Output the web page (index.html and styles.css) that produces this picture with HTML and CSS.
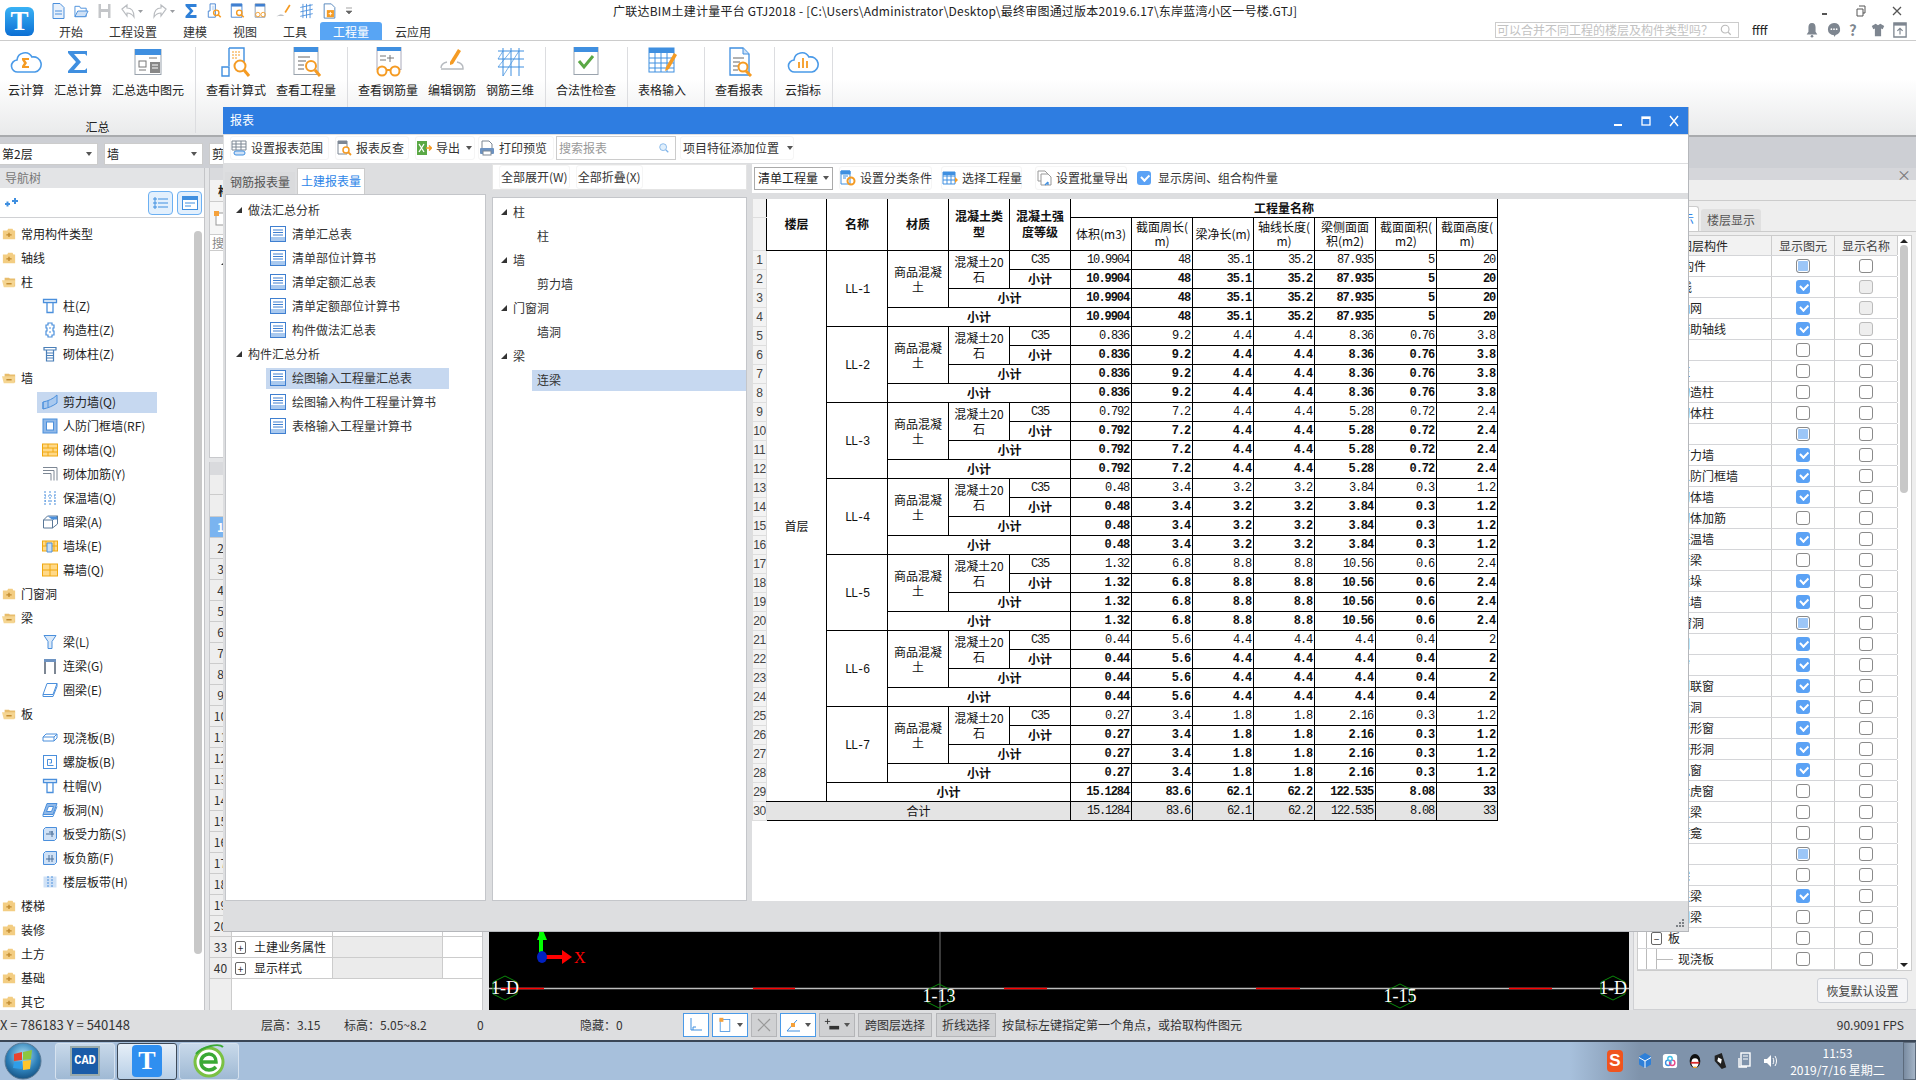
FILE: index.html
```html
<!DOCTYPE html>
<html lang="zh">
<head>
<meta charset="utf-8">
<title>广联达BIM土建计量平台 GTJ2018</title>
<link rel="stylesheet" href="styles.css">
</head>
<body>
<svg class="sprite" xmlns="http://www.w3.org/2000/svg">
  <symbol id="i-folder" viewBox="0 0 16 16"><path d="M1 4h5l1-2h5l1 2h2v10H1z" fill="#f3cd82"/><path d="M5 9h6M8 6.5v5" stroke="#c08a2e" stroke-width="1.6"/></symbol>
  <symbol id="i-folder-open" viewBox="0 0 16 16"><path d="M3 3h5l1 1h6v9H3z" fill="#e8bd6c"/><path d="M0 6h15l-1 8H2z" fill="#f5d591"/><path d="M5 10h6" stroke="#c08a2e" stroke-width="1.6"/></symbol>
  <symbol id="i-col" viewBox="0 0 16 16"><path d="M1.5 1.5h13v3h-13zM5 4.5h6v10H5z" fill="#fff" stroke="#4a8fdc" stroke-width="1.3"/></symbol>
  <symbol id="i-gz" viewBox="0 0 16 16"><path d="M6 1h4v2h2v3h-1v3h1v4h-2v2H6v-2H4V9h1V6H4V3h2z" fill="#fff" stroke="#4a8fdc" stroke-width="1.2"/><path d="M7 6h2M7 10h2" stroke="#4a8fdc"/></symbol>
  <symbol id="i-qt" viewBox="0 0 16 16"><path d="M2 1.5h12v2.5H2zM4.500 4h7v11h-7z" fill="#fff" stroke="#4a7fb8" stroke-width="1.2"/><path d="M5 7h6M5 9.500h6M5 12h6" stroke="#4a7fb8"/></symbol>
  <symbol id="i-wall" viewBox="0 0 16 16"><path d="M1 8C6 7 11 5 15 1v8c-4 3-9 5-14 6z" fill="#a9c9ef" stroke="#4a8fdc"/><path d="M1 8v7M6 7v6" stroke="#4a8fdc"/></symbol>
  <symbol id="i-rf" viewBox="0 0 16 16"><rect x="1" y="1" width="14" height="14" fill="#8fb8e8" stroke="#4a8fdc"/><rect x="4.500" y="4" width="7" height="8" fill="#fff" stroke="#4a8fdc"/></symbol>
  <symbol id="i-brick" viewBox="0 0 16 16"><rect x=".5" y="2" width="15" height="12" fill="#ffd988" stroke="#f0a810"/><path d="M1 6h14M1 10h14M6 2v4M11 6v4M6 10v4" stroke="#f0a810"/></symbol>
  <symbol id="i-jj" viewBox="0 0 16 16"><path d="M1 1.500h14v13M1 4.500h11v10M1 7.500h8v7" fill="none" stroke="#7d8794"/></symbol>
  <symbol id="i-bw" viewBox="0 0 16 16"><path d="M3 1v14M8 1v14M13 1v14" stroke="#4a8fdc" stroke-dasharray="2 1"/><path d="M3 6h10M3 11h10" stroke="#4a8fdc" stroke-dasharray="1 2"/></symbol>
  <symbol id="i-al" viewBox="0 0 16 16"><path d="M1.500 6l4-4h10v8l-5 4h-9z" fill="#fff" stroke="#5a7898"/><path d="M1.500 6h9v8M10.500 6l5-4" fill="none" stroke="#5a7898"/><path d="M6 2.500h9v3H10z" fill="#4a8fdc"/></symbol>
  <symbol id="i-dz" viewBox="0 0 16 16"><rect x=".5" y="3" width="15" height="10" fill="#ffd988" stroke="#f0a810"/><path d="M1 8h14M4 3v5M12 3v10" stroke="#f0a810"/><path d="M5 5h5v9H5z" fill="#c9dff6" stroke="#4a8fdc"/></symbol>
  <symbol id="i-mq" viewBox="0 0 16 16"><rect x=".5" y="2" width="15" height="12" fill="#ffd988" stroke="#f0a810"/><path d="M1 8h14M8 2v12" stroke="#f0a810"/></symbol>
  <symbol id="i-beam" viewBox="0 0 16 16"><path d="M2 1.500h12l-4 6v7H6v-7z" fill="#dbe9f8" stroke="#4a8fdc"/></symbol>
  <symbol id="i-ll" viewBox="0 0 16 16"><path d="M2 1h12v3H2z" fill="#6d93c2"/><path d="M3 4v12M13 4v12" stroke="#7d8794" stroke-width="2"/></symbol>
  <symbol id="i-ql" viewBox="0 0 16 16"><path d="M5 1.500h10l-4 11H1z" fill="#fff" stroke="#4a8fdc"/><path d="M1 12.500v2h10l4-10v-3" fill="none" stroke="#4a8fdc"/></symbol>
  <symbol id="i-xjb" viewBox="0 0 16 16"><path d="M1 7l3-3h11v4l-3 3H1z" fill="#fff" stroke="#4a8fdc"/><path d="M1 7h11v4M12 7l3-3" fill="none" stroke="#4a8fdc"/></symbol>
  <symbol id="i-lxb" viewBox="0 0 16 16"><rect x="1.500" y="1.500" width="13" height="13" fill="#fff" stroke="#4a8fdc"/><path d="M11.500 11.500h-6v-6h4v3.500h-2" fill="none" stroke="#4a8fdc"/></symbol>
  <symbol id="i-bd" viewBox="0 0 16 16"><path d="M5 1.500h10l-4 11H1z" fill="#8fb8e8" stroke="#4a8fdc"/><path d="M6.500 4.500h5l-2 5h-5z" fill="#fff" stroke="#4a8fdc"/><path d="M1 12.500v2h10l4-10" fill="none" stroke="#4a8fdc"/></symbol>
  <symbol id="i-bsl" viewBox="0 0 16 16"><path d="M1.500 3.500l2-2h11v11l-2 2h-11z" fill="#cfe1f6" stroke="#4a8fdc"/><path d="M4 8h8M10 5v6M7 6h4" stroke="#4a6f98" fill="none"/></symbol>
  <symbol id="i-bfj" viewBox="0 0 16 16"><path d="M1.500 3.500l2-2h11v11l-2 2h-11z" fill="#cfe1f6" stroke="#4a8fdc"/><path d="M4 9h8M7 5v7M10 5v7" stroke="#4a6f98" fill="none"/></symbol>
  <symbol id="i-bd2" viewBox="0 0 16 16"><rect x="1.500" y="2.500" width="13" height="11" fill="#cfe1f6"/><path d="M6 2v12M10 2v12" stroke="#4a8fdc" stroke-dasharray="2 1"/></symbol>
  <symbol id="i-doc" viewBox="0 0 16 16"><rect x=".5" y=".5" width="15" height="15" fill="#fff" stroke="#3f7fd0"/><path d="M3 4h10M3 6.500h10M3 9h10" stroke="#3f7fd0"/><path d="M1 11h14v4H1z" fill="#a9c9ef"/></symbol>
  <symbol id="i-mag" viewBox="0 0 16 16"><circle cx="6.500" cy="6.500" r="4.500" fill="none" stroke="#f59b23" stroke-width="2"/><path d="M10 10l5 5" stroke="#f59b23" stroke-width="2.500"/></symbol>
  <symbol id="r-cloud" viewBox="0 0 32 24"><path d="M8 22a6 6 0 0 1-1-12 8 8 0 0 1 15-3 6.500 6.500 0 0 1 3 15z" fill="#fff" stroke="#4a9ae8" stroke-width="1.600"/></symbol>
</svg>

<div class="app">
  <header class="head">
    <div class="logo"><span class="logo-t">T</span></div>
    <div class="head-main">
      <div class="qa">
        <div class="qa-icons">
          <svg class="qi" viewBox="0 0 14 16"><path d="M1.500.5h7l4 4v11h-11z" fill="#e7f0fb" stroke="#4a8fdc"/><path d="M3.500 8h7M3.500 11h7" stroke="#4a8fdc"/></svg>
          <svg class="qi" viewBox="0 0 16 16"><path d="M1 3h5l1 2h6v9H1z" fill="#fff" stroke="#4a8fdc"/><path d="M1 14l3-6h11l-3 6z" fill="#cfe1f6" stroke="#4a8fdc"/></svg>
          <svg class="qi" viewBox="0 0 14 16"><path d="M1 1h12v14H1z" fill="#c4c6c9"/><path d="M3.500 1h7v5h-7zM3.500 9h7v6h-7z" fill="#fff"/></svg>
          <svg class="qi qi-w" viewBox="0 0 24 16"><path d="M2 6l5-4v3c4 0 7 2 7 9-2-3-4-4-7-4v3z" fill="#fff" stroke="#b9bcc0" stroke-width="1.200"/><path d="M18 7h5l-2.500 3z" fill="#9a9da1"/></svg>
          <svg class="qi qi-w" viewBox="0 0 24 16"><path d="M14 6L9 2v3C5 5 2 7 2 14c2-3 4-4 7-4v3z" fill="#fff" stroke="#b9bcc0" stroke-width="1.200"/><path d="M18 7h5l-2.500 3z" fill="#9a9da1"/></svg>
          <svg class="qi" viewBox="0 0 14 16"><path d="M1 1h11v3L5.500 4 9 8l-3.500 4H12v3H1V13l4.500-5L1 3z" fill="#2f80d8"/></svg>
          <svg class="qi" viewBox="0 0 16 18"><path d="M1 16h8V1H3v8H1z" fill="#fff" stroke="#3f7fd0"/><path d="M5 3h3v5H5z" fill="#cfe1f6"/><circle cx="10" cy="11" r="3" fill="none" stroke="#f59b23" stroke-width="1.600"/><path d="M12 13l3 3" stroke="#f59b23" stroke-width="1.800"/></svg>
          <svg class="qi" viewBox="0 0 16 18"><path d="M1 1h12v15H1z" fill="#fff" stroke="#3f7fd0"/><path d="M1 1h12v3H1z" fill="#3f7fd0"/><circle cx="10" cy="11" r="3" fill="none" stroke="#f59b23" stroke-width="1.600"/><path d="M12 13l3 3" stroke="#f59b23" stroke-width="1.800"/></svg>
          <svg class="qi" viewBox="0 0 16 18"><path d="M2 1h11v15H2z" fill="#fff" stroke="#8a97a8"/><path d="M2 1h11v3H2z" fill="#3f7fd0"/><circle cx="5" cy="13" r="2.500" fill="none" stroke="#f59b23"/><circle cx="11" cy="13" r="2.500" fill="none" stroke="#f59b23"/></svg>
          <svg class="qi" viewBox="0 0 16 16"><path d="M9 9l5-8 1.500 1L10.500 10z" fill="#f59b23"/><path d="M1 14c2-3 5-3 8-1H1z" fill="#a8acb1"/></svg>
          <svg class="qi" viewBox="0 0 16 18"><path d="M4 1v16M8 1v16M12 1v16M1 5l14-3M1 10l14-3M1 15l14-3" stroke="#4a8fdc" fill="none"/></svg>
          <svg class="qi" viewBox="0 0 14 18"><path d="M1 1h8l4 4v12H1z" fill="#fff" stroke="#4a7fb8"/><rect x="4" y="8" width="8" height="8" fill="#f59b23"/><path d="M6 12h4M8 10v4" stroke="#fff"/></svg>
          <svg class="qi-dd" viewBox="0 0 8 10"><path d="M1 2h6M1 5h6l-3 3z" fill="#666" stroke="#666" stroke-width=".6"/></svg>
        </div>
        <div class="doc-title">广联达BIM土建计量平台 GTJ2018 - [C:\Users\Administrator\Desktop\最终审图通过版本2019.6.17\东岸蓝湾小区一号楼.GTJ]</div>
        <div class="win-ctrl">
          <svg class="wc" viewBox="0 0 12 12"><path d="M3 9h5" stroke="#555" stroke-width="2"/></svg>
          <svg class="wc" viewBox="0 0 12 12"><path d="M4 1h6v7h-2M2 4h6v7H2z" fill="#fff" stroke="#555"/></svg>
          <svg class="wc" viewBox="0 0 12 12"><path d="M2 2l8 8M10 2l-8 8" stroke="#555" stroke-width="1.300"/></svg>
        </div>
      </div>
      <div class="menu">
        <nav class="tabs">
          <span class="tab">开始</span><span class="tab">工程设置</span><span class="tab">建模</span><span class="tab">视图</span><span class="tab">工具</span><span class="tab tab-on">工程量</span><span class="tab">云应用</span>
        </nav>
        <div class="help-search"><span class="hs-text">可以合并不同工程的楼层及构件类型吗？</span><svg class="hs-ico" viewBox="0 0 14 14"><circle cx="6" cy="6" r="4.500" fill="none" stroke="#bbb" stroke-width="1.300"/><path d="M9.500 9.500l3 3" stroke="#bbb" stroke-width="1.500"/></svg></div>
        <span class="user">ffff</span>
        <div class="head-icons">
          <svg class="hi" viewBox="0 0 14 18"><path d="M7 1c3 0 4 2 4 5v5l2 3H1l2-3V6c0-3 1-5 4-5z" fill="#7e8690"/><circle cx="7" cy="16" r="1.500" fill="#7e8690"/></svg>
          <svg class="hi" viewBox="0 0 16 18"><path d="M8 1a7 7 0 0 1 2 13.700L8 17v-2A7 7 0 0 1 8 1z" fill="#7e8690"/><circle cx="5" cy="8" r="1" fill="#fff"/><circle cx="8" cy="8" r="1" fill="#fff"/><circle cx="11" cy="8" r="1" fill="#fff"/></svg>
          <span class="hi-q">?</span>
          <svg class="hi" viewBox="0 0 18 18"><path d="M6 1L1 4l2 4 2-1v10h8V7l2 1 2-4-5-3-3 2z" fill="#7e8690"/></svg>
          <svg class="hi" viewBox="0 0 16 18"><path d="M1 1h14v16H1z" fill="#fff" stroke="#7e8690" stroke-width="1.500"/><path d="M1 1h14v3H1z" fill="#7e8690"/><path d="M8 14V7M5 10l3-3 3 3" fill="none" stroke="#7e8690" stroke-width="1.300"/></svg>
        </div>
      </div>
    </div>
  </header>

  <section class="ribbon">
    <div class="rgroup rgroup-first">
      <div class="ritems">
        <div class="ritem w36"><svg class="ric" viewBox="0 0 32 24"><use href="#r-cloud"/><path d="M12 8h7v2h-4l2 3-2 3h4v2h-7v-2l2-3-2-3z" fill="#f59b23"/></svg><span>云计算</span></div>
        <div class="ritem w48"><svg class="ric" viewBox="0 0 32 24"><path d="M6 1h19v5l-2-2H12l7 8-7 8h11l2-2v5H6v-2l8-9-8-9z" fill="#3f8fe0"/></svg><span>汇总计算</span></div>
        <div class="ritem w72"><svg class="ric" viewBox="0 0 32 26"><rect x="3" y=".5" width="26" height="25" fill="#fff" stroke="#9aa3ad"/><rect x="3" y="0" width="26" height="6" fill="#3f8fe0"/><rect x="7" y="12" width="7" height="6" fill="none" stroke="#777"/><path d="M7 21h7M17 9h8" stroke="#777"/><rect x="18" y="13" width="10" height="11" fill="#888"/><path d="M20 16h6M20 19h6" stroke="#fff"/></svg><span>汇总选中图元</span></div>
      </div>
      <div class="rlabel">汇总</div>
    </div>
    <div class="rgroup">
      <div class="ritems">
        <div class="ritem w60"><svg class="ric" viewBox="0 0 32 30"><path d="M9 1h15v15M9 1v18M2 20h7v9H2z" fill="#fff" stroke="#3f8fe0" stroke-width="1.400"/><path d="M12 5h9M12 8h9M12 11h5" stroke="#f59b23" stroke-dasharray="2 1"/><circle cx="20" cy="19" r="5.500" fill="#fff" stroke="#f59b23" stroke-width="2"/><path d="M24 23l5 6" stroke="#f59b23" stroke-width="3"/></svg><span>查看计算式</span></div>
        <div class="ritem w60"><svg class="ric" viewBox="0 0 32 30"><rect x="4" y=".5" width="24" height="27" fill="#fff" stroke="#9aa3ad"/><rect x="4" y="0" width="24" height="5" fill="#3f8fe0"/><path d="M8 10h12M8 14h8M8 18h6M8 22h6" stroke="#666"/><circle cx="21" cy="19" r="5" fill="#fff" stroke="#f59b23" stroke-width="2"/><path d="M25 23l5 6" stroke="#f59b23" stroke-width="3"/></svg><span>查看工程量</span></div>
      </div>
    </div>
    <div class="rgroup">
      <div class="ritems">
        <div class="ritem w60"><svg class="ric" viewBox="0 0 32 30"><rect x="5" y=".5" width="24" height="22" fill="#fff" stroke="#aab"/><rect x="5" y="0" width="24" height="4" fill="#3f8fe0"/><path d="M8 9h6M8 13h6M18 8v7M15 11h7" stroke="#777"/><circle cx="10" cy="24" r="4.500" fill="#fff" stroke="#f59b23" stroke-width="2"/><circle cx="23" cy="24" r="4.500" fill="#fff" stroke="#f59b23" stroke-width="2"/><path d="M14 23h5" stroke="#f59b23" stroke-width="2"/></svg><span>查看钢筋量</span></div>
        <div class="ritem w48"><svg class="ric" viewBox="0 0 32 30"><path d="M14 15l8-13 3 2-8 13-3 1z" fill="#f59b23"/><path d="M5 21c0-3 2-5 6-6M21 15c4 1 6 3 6 6v1H5" fill="none" stroke="#b6babf" stroke-width="1.400"/></svg><span>编辑钢筋</span></div>
        <div class="ritem w48"><svg class="ric" viewBox="0 0 32 30"><path d="M9 1v28M17 1v28M25 1v28M4 4h26M4 12h26M4 20h26" stroke="#3f8fe0" fill="none"/><path d="M4 12l5-8M4 20l13-16M9 29l16-25" stroke="#3f8fe0" fill="none" stroke-width=".7"/></svg><span>钢筋三维</span></div>
      </div>
    </div>
    <div class="rgroup">
      <div class="ritems">
        <div class="ritem w60"><svg class="ric" viewBox="0 0 32 30"><rect x="4" y=".5" width="24" height="27" fill="#fff" stroke="#9aa3ad"/><rect x="4" y="0" width="24" height="5" fill="#3f8fe0"/><path d="M9 14l5 6 9-11" fill="none" stroke="#5aa845" stroke-width="3"/></svg><span>合法性检查</span></div>
      </div>
    </div>
    <div class="rgroup rgroup-wide">
      <div class="ritems">
        <div class="ritem w48"><svg class="ric" viewBox="0 0 32 30"><rect x="3" y="1" width="25" height="24" fill="#fff" stroke="#3f8fe0"/><rect x="3" y="1" width="25" height="5" fill="#3f8fe0"/><path d="M3 11h25M3 16h25M3 21h25M9 6v19M15 6v19M21 6v19" stroke="#3f8fe0"/><path d="M20 20l8-14 3 2-8 14-4 2z" fill="#f59b23"/></svg><span>表格输入</span></div>
      </div>
    </div>
    <div class="rgroup">
      <div class="ritems">
        <div class="ritem w48"><svg class="ric" viewBox="0 0 32 30"><path d="M7 1h13l6 6v21H7z" fill="#fff" stroke="#3f8fe0" stroke-width="1.300"/><path d="M20 1v6h6" fill="#cfe1f6" stroke="#3f8fe0"/><path d="M10 11h11M10 15h7M10 19h5M10 23h5" stroke="#666"/><circle cx="20" cy="20" r="4.500" fill="#fff" stroke="#f59b23" stroke-width="2"/><path d="M23 24l5 5" stroke="#f59b23" stroke-width="3"/></svg><span>查看报表</span></div>
      </div>
    </div>
    <div class="rgroup">
      <div class="ritems">
        <div class="ritem w36"><svg class="ric" viewBox="0 0 32 24"><use href="#r-cloud"/><path d="M12 12v6M16 8v10M20 11v7" stroke="#f59b23" stroke-width="1.800"/></svg><span>云指标</span></div>
      </div>
    </div>
  </section>

  <main class="work">
    <div class="selectors">
      <div class="sel">第2层<i class="dd"></i></div>
      <div class="sel">墙<i class="dd"></i></div>
      <div class="sel">剪力墙<i class="dd"></i></div>
    </div>
    <div class="panes">
      <aside class="nav">
        <div class="pane-head">导航树</div>
        <div class="nav-tools">
          <svg class="nav-pin" viewBox="0 0 16 14"><path d="M2 8h5M4.500 5.500v5M9 5h6M12 2v6" stroke="#3f8fe0" stroke-width="2"/></svg>
          <div class="nav-btns">
            <span class="nbtn"><svg viewBox="0 0 16 14"><path d="M1 2h2v2H1zM1 6h2v2H1zM1 10h2v2H1z" fill="none" stroke="#3f8fe0"/><path d="M5 3h10M5 7h10M5 11h10" stroke="#3f8fe0"/></svg></span>
            <span class="nbtn"><svg viewBox="0 0 16 14"><rect x=".5" y=".5" width="15" height="13" fill="#fff" stroke="#3f8fe0"/><rect x="1" y="1" width="14" height="3" fill="#3f8fe0"/><path d="M3 7h10M3 10h6" stroke="#3f8fe0"/></svg></span>
          </div>
        </div>
        <ul class="nav-list">
          <li class="nr"><svg class="fo"><use href="#i-folder"/></svg>常用构件类型</li>
          <li class="nr"><svg class="fo"><use href="#i-folder"/></svg>轴线</li>
          <li class="nr"><svg class="fo"><use href="#i-folder-open"/></svg>柱</li>
          <li class="nr nl"><span class="nli"><svg class="ic"><use href="#i-col"/></svg>柱(Z)</span></li>
          <li class="nr nl"><span class="nli"><svg class="ic"><use href="#i-gz"/></svg>构造柱(Z)</span></li>
          <li class="nr nl"><span class="nli"><svg class="ic"><use href="#i-qt"/></svg>砌体柱(Z)</span></li>
          <li class="nr"><svg class="fo"><use href="#i-folder-open"/></svg>墙</li>
          <li class="nr nl"><span class="nli nli-on"><svg class="ic"><use href="#i-wall"/></svg>剪力墙(Q)</span></li>
          <li class="nr nl"><span class="nli"><svg class="ic"><use href="#i-rf"/></svg>人防门框墙(RF)</span></li>
          <li class="nr nl"><span class="nli"><svg class="ic"><use href="#i-brick"/></svg>砌体墙(Q)</span></li>
          <li class="nr nl"><span class="nli"><svg class="ic"><use href="#i-jj"/></svg>砌体加筋(Y)</span></li>
          <li class="nr nl"><span class="nli"><svg class="ic"><use href="#i-bw"/></svg>保温墙(Q)</span></li>
          <li class="nr nl"><span class="nli"><svg class="ic"><use href="#i-al"/></svg>暗梁(A)</span></li>
          <li class="nr nl"><span class="nli"><svg class="ic"><use href="#i-dz"/></svg>墙垛(E)</span></li>
          <li class="nr nl"><span class="nli"><svg class="ic"><use href="#i-mq"/></svg>幕墙(Q)</span></li>
          <li class="nr"><svg class="fo"><use href="#i-folder"/></svg>门窗洞</li>
          <li class="nr"><svg class="fo"><use href="#i-folder-open"/></svg>梁</li>
          <li class="nr nl"><span class="nli"><svg class="ic"><use href="#i-beam"/></svg>梁(L)</span></li>
          <li class="nr nl"><span class="nli"><svg class="ic"><use href="#i-ll"/></svg>连梁(G)</span></li>
          <li class="nr nl"><span class="nli"><svg class="ic"><use href="#i-ql"/></svg>圈梁(E)</span></li>
          <li class="nr"><svg class="fo"><use href="#i-folder-open"/></svg>板</li>
          <li class="nr nl"><span class="nli"><svg class="ic"><use href="#i-xjb"/></svg>现浇板(B)</span></li>
          <li class="nr nl"><span class="nli"><svg class="ic"><use href="#i-lxb"/></svg>螺旋板(B)</span></li>
          <li class="nr nl"><span class="nli"><svg class="ic"><use href="#i-col"/></svg>柱帽(V)</span></li>
          <li class="nr nl"><span class="nli"><svg class="ic"><use href="#i-bd"/></svg>板洞(N)</span></li>
          <li class="nr nl"><span class="nli"><svg class="ic"><use href="#i-bsl"/></svg>板受力筋(S)</span></li>
          <li class="nr nl"><span class="nli"><svg class="ic"><use href="#i-bfj"/></svg>板负筋(F)</span></li>
          <li class="nr nl"><span class="nli"><svg class="ic"><use href="#i-bd2"/></svg>楼层板带(H)</span></li>
          <li class="nr"><svg class="fo"><use href="#i-folder"/></svg>楼梯</li>
          <li class="nr"><svg class="fo"><use href="#i-folder"/></svg>装修</li>
          <li class="nr"><svg class="fo"><use href="#i-folder"/></svg>土方</li>
          <li class="nr"><svg class="fo"><use href="#i-folder"/></svg>基础</li>
          <li class="nr"><svg class="fo"><use href="#i-folder"/></svg>其它</li>
        </ul>
        <div class="nav-scroll"></div>
      </aside>

      <section class="mid">
        <div class="comp">
          <div class="strip"></div>
          <div class="comp-title">构件列表</div>
          <div class="comp-tools"><svg class="ic" viewBox="0 0 16 16"><rect x="3" y="3" width="11" height="12" fill="#fff" stroke="#999"/><rect x="1" y="1" width="5" height="5" fill="#f5a13a"/></svg></div>
          <div class="comp-search">搜索构件...</div>
          <div class="comp-tree"><i class="tri"></i>剪力墙</div>
        </div>
        <div class="prop">
          <div class="strip"></div>
          <div class="prop-head"><span class="pc-n"></span><span class="pc-a">属性名称</span><span class="pc-b">属性值</span><span class="pc-c">附加</span></div>
          <div class="prop-blank"><span class="pc-n"></span></div>
          <div class="pr pr-on"><span class="pc-n">1</span><span class="pc-a">名称</span><span class="pc-b"></span><span class="pc-c"></span></div>
          <div class="pr"><span class="pc-n">2</span><span class="pc-a"></span><span class="pc-b"></span><span class="pc-c"></span></div>
          <div class="pr"><span class="pc-n">3</span><span class="pc-a"></span><span class="pc-b"></span><span class="pc-c"></span></div>
          <div class="pr"><span class="pc-n">4</span><span class="pc-a"></span><span class="pc-b"></span><span class="pc-c"></span></div>
          <div class="pr"><span class="pc-n">5</span><span class="pc-a"></span><span class="pc-b"></span><span class="pc-c"></span></div>
          <div class="pr"><span class="pc-n">6</span><span class="pc-a"></span><span class="pc-b"></span><span class="pc-c"></span></div>
          <div class="pr"><span class="pc-n">7</span><span class="pc-a"></span><span class="pc-b"></span><span class="pc-c"></span></div>
          <div class="pr"><span class="pc-n">8</span><span class="pc-a"></span><span class="pc-b"></span><span class="pc-c"></span></div>
          <div class="pr"><span class="pc-n">9</span><span class="pc-a"></span><span class="pc-b"></span><span class="pc-c"></span></div>
          <div class="pr"><span class="pc-n">10</span><span class="pc-a"></span><span class="pc-b"></span><span class="pc-c"></span></div>
          <div class="pr"><span class="pc-n">11</span><span class="pc-a"></span><span class="pc-b"></span><span class="pc-c"></span></div>
          <div class="pr"><span class="pc-n">12</span><span class="pc-a"></span><span class="pc-b"></span><span class="pc-c"></span></div>
          <div class="pr"><span class="pc-n">13</span><span class="pc-a"></span><span class="pc-b"></span><span class="pc-c"></span></div>
          <div class="pr"><span class="pc-n">14</span><span class="pc-a"></span><span class="pc-b"></span><span class="pc-c"></span></div>
          <div class="pr"><span class="pc-n">15</span><span class="pc-a"></span><span class="pc-b"></span><span class="pc-c"></span></div>
          <div class="pr"><span class="pc-n">16</span><span class="pc-a"></span><span class="pc-b"></span><span class="pc-c"></span></div>
          <div class="pr"><span class="pc-n">17</span><span class="pc-a"></span><span class="pc-b"></span><span class="pc-c"></span></div>
          <div class="pr"><span class="pc-n">18</span><span class="pc-a"></span><span class="pc-b"></span><span class="pc-c"></span></div>
          <div class="pr"><span class="pc-n">19</span><span class="pc-a"></span><span class="pc-b"></span><span class="pc-c"></span></div>
          <div class="pr"><span class="pc-n">20</span><span class="pc-a"></span><span class="pc-b"></span><span class="pc-c"></span></div>
          <div class="pr"><span class="pc-n">33</span><span class="pc-a"><i class="plus">+</i>土建业务属性</span><span class="pc-b pc-g"></span><span class="pc-c"></span></div>
          <div class="pr"><span class="pc-n">40</span><span class="pc-a"><i class="plus">+</i>显示样式</span><span class="pc-b pc-g"></span><span class="pc-c"></span></div>
          <div class="prop-fill"><span class="pc-n"></span></div>
        </div>
      </section>

      <section class="canvas">
        <svg class="scene" viewBox="489 168 1140 842" xmlns="http://www.w3.org/2000/svg">
          <path d="M940 168V1010" stroke="#777"/>
          <path d="M489 988.500H1629" stroke="#bdbdbd" stroke-width="1.500"/>
          <path d="M501 988.500h43M753 988.500h42M1004 988.500h43M1256 988.500h44M1509 988.500h43" stroke="#f00" stroke-width="1.500"/>
          <path d="M541 957V932" stroke="#0f0" stroke-width="4"/><path d="M537 940l5-12 5 12z" fill="#0f0"/>
          <path d="M542 957h25" stroke="#f00" stroke-width="4"/><path d="M562 950l10 7-10 7z" fill="#f00"/>
          <ellipse cx="542" cy="957" rx="5" ry="6" fill="#0020c0"/>
          <text class="ax" x="574" y="963">X</text>
          <g fill="none" stroke="#0a8a0a"><path d="M505 976l12 6v12l-12 6-12-6v-12zM939 984l12 6v12l-12 6-12-6v-12zM1400 984l12 6v12l-12 6-12-6v-12zM1613 976l12 6v12l-12 6-12-6v-12z"/></g>
          <text class="lb" x="505" y="994">1-D</text>
          <text class="lb" x="939" y="1002">1-13</text>
          <text class="lb" x="1400" y="1002">1-15</text>
          <text class="lb" x="1613" y="994">1-D</text>
        </svg>
      </section>

      <aside class="layers">
        <div class="ly-head"><span class="ly-x">×</span></div>
        <div class="ly-tool"></div>
        <div class="ly-tabs"><span class="ly-tab ly-tab-on">图层显示</span><span class="ly-tab">楼层显示</span></div>
        <div class="ly-body">
          <div class="ly-table">
            <div class="lr lr-head"><span class="lc-a lc-head">图层构件</span><span class="lc-b">显示图元</span><span class="lc-b">显示名称</span></div>
            <div class="lr"><span class="lc-a l0">所有构件</span><span class="lc-b"><i class="cb part"></i></span><span class="lc-b"><i class="cb"></i></span></div>
            <div class="lr"><span class="lc-a l1">轴线</span><span class="lc-b"><i class="cb on"></i></span><span class="lc-b"><i class="cb off"></i></span></div>
            <div class="lr"><span class="lc-a l2">轴网</span><span class="lc-b"><i class="cb on"></i></span><span class="lc-b"><i class="cb off"></i></span></div>
            <div class="lr"><span class="lc-a l2">辅助轴线</span><span class="lc-b"><i class="cb on"></i></span><span class="lc-b"><i class="cb off"></i></span></div>
            <div class="lr"><span class="lc-a l1">柱</span><span class="lc-b"><i class="cb"></i></span><span class="lc-b"><i class="cb"></i></span></div>
            <div class="lr"><span class="lc-a l2">柱</span><span class="lc-b"><i class="cb"></i></span><span class="lc-b"><i class="cb"></i></span></div>
            <div class="lr"><span class="lc-a l2">构造柱</span><span class="lc-b"><i class="cb"></i></span><span class="lc-b"><i class="cb"></i></span></div>
            <div class="lr"><span class="lc-a l2">砌体柱</span><span class="lc-b"><i class="cb"></i></span><span class="lc-b"><i class="cb"></i></span></div>
            <div class="lr"><span class="lc-a l1">墙</span><span class="lc-b"><i class="cb part"></i></span><span class="lc-b"><i class="cb"></i></span></div>
            <div class="lr"><span class="lc-a l2">剪力墙</span><span class="lc-b"><i class="cb on"></i></span><span class="lc-b"><i class="cb"></i></span></div>
            <div class="lr"><span class="lc-a l2">人防门框墙</span><span class="lc-b"><i class="cb on"></i></span><span class="lc-b"><i class="cb"></i></span></div>
            <div class="lr"><span class="lc-a l2">砌体墙</span><span class="lc-b"><i class="cb on"></i></span><span class="lc-b"><i class="cb"></i></span></div>
            <div class="lr"><span class="lc-a l2">砌体加筋</span><span class="lc-b"><i class="cb"></i></span><span class="lc-b"><i class="cb"></i></span></div>
            <div class="lr"><span class="lc-a l2">保温墙</span><span class="lc-b"><i class="cb on"></i></span><span class="lc-b"><i class="cb"></i></span></div>
            <div class="lr"><span class="lc-a l2">暗梁</span><span class="lc-b"><i class="cb"></i></span><span class="lc-b"><i class="cb"></i></span></div>
            <div class="lr"><span class="lc-a l2">墙垛</span><span class="lc-b"><i class="cb on"></i></span><span class="lc-b"><i class="cb"></i></span></div>
            <div class="lr"><span class="lc-a l2">幕墙</span><span class="lc-b"><i class="cb on"></i></span><span class="lc-b"><i class="cb"></i></span></div>
            <div class="lr"><span class="lc-a l1">门窗洞</span><span class="lc-b"><i class="cb part"></i></span><span class="lc-b"><i class="cb"></i></span></div>
            <div class="lr"><span class="lc-a l2">门</span><span class="lc-b"><i class="cb on"></i></span><span class="lc-b"><i class="cb"></i></span></div>
            <div class="lr"><span class="lc-a l2">窗</span><span class="lc-b"><i class="cb on"></i></span><span class="lc-b"><i class="cb"></i></span></div>
            <div class="lr"><span class="lc-a l2">门联窗</span><span class="lc-b"><i class="cb on"></i></span><span class="lc-b"><i class="cb"></i></span></div>
            <div class="lr"><span class="lc-a l2">墙洞</span><span class="lc-b"><i class="cb on"></i></span><span class="lc-b"><i class="cb"></i></span></div>
            <div class="lr"><span class="lc-a l2">带形窗</span><span class="lc-b"><i class="cb on"></i></span><span class="lc-b"><i class="cb"></i></span></div>
            <div class="lr"><span class="lc-a l2">带形洞</span><span class="lc-b"><i class="cb on"></i></span><span class="lc-b"><i class="cb"></i></span></div>
            <div class="lr"><span class="lc-a l2">飘窗</span><span class="lc-b"><i class="cb on"></i></span><span class="lc-b"><i class="cb"></i></span></div>
            <div class="lr"><span class="lc-a l2">老虎窗</span><span class="lc-b"><i class="cb"></i></span><span class="lc-b"><i class="cb"></i></span></div>
            <div class="lr"><span class="lc-a l2">过梁</span><span class="lc-b"><i class="cb"></i></span><span class="lc-b"><i class="cb"></i></span></div>
            <div class="lr"><span class="lc-a l2">壁龛</span><span class="lc-b"><i class="cb"></i></span><span class="lc-b"><i class="cb"></i></span></div>
            <div class="lr"><span class="lc-a l1">梁</span><span class="lc-b"><i class="cb part"></i></span><span class="lc-b"><i class="cb"></i></span></div>
            <div class="lr"><span class="lc-a l2">梁</span><span class="lc-b"><i class="cb"></i></span><span class="lc-b"><i class="cb"></i></span></div>
            <div class="lr"><span class="lc-a l2">连梁</span><span class="lc-b"><i class="cb on"></i></span><span class="lc-b"><i class="cb"></i></span></div>
            <div class="lr"><span class="lc-a l2">圈梁</span><span class="lc-b"><i class="cb"></i></span><span class="lc-b"><i class="cb"></i></span></div>
            <div class="lr"><span class="lc-a l1 lc-minus"><i class="minus">−</i>板</span><span class="lc-b"><i class="cb"></i></span><span class="lc-b"><i class="cb"></i></span></div>
            <div class="lr"><span class="lc-a l2 lc-leaf">现浇板</span><span class="lc-b"><i class="cb"></i></span><span class="lc-b"><i class="cb"></i></span></div>
          </div>
          <div class="ly-scroll"><i class="arr-up"></i><div class="ly-thumb"></div><i class="arr-down"></i></div>
        </div>
        <div class="ly-foot"><button class="restore">恢复默认设置</button></div>
      </aside>
    </div>
  </main>

  <footer class="status">
    <span class="st st-xy">X = 786183 Y = 540148</span>
    <span class="st st-h">层高：3.15</span>
    <span class="st st-b">标高：5.05~8.2</span>
    <span class="st st-z">0</span>
    <span class="st st-z">隐藏：0</span>
    <span class="sb sb-on sb-s"><svg viewBox="0 0 16 16"><path d="M3 1v12h11M5 13v-3h3" fill="none" stroke="#3f8fe0"/></svg></span>
    <span class="sb sb-on sb-m"><svg viewBox="0 0 16 20"><rect x="2" y="3" width="12" height="15" fill="none" stroke="#3f8fe0"/><rect x="1" y="1" width="5" height="5" fill="#f5a13a"/></svg><i class="dd"></i></span>
    <span class="sb sb-s sb-g"><svg viewBox="0 0 16 16"><path d="M2 2l12 12M14 2L2 14" stroke="#999" stroke-width="1.200"/></svg></span>
    <span class="sb sb-on sb-m"><svg viewBox="0 0 16 16"><path d="M2 14h13M2 14L12 3" fill="none" stroke="#3f8fe0"/><rect x="6" y="6" width="4" height="4" fill="#f5a13a"/></svg><i class="dd"></i></span>
    <span class="sb sb-m sb-g"><svg viewBox="0 0 18 16"><path d="M1 4h6M4 1v6" stroke="#333"/><rect x="6" y="9" width="11" height="4" fill="#333"/></svg><i class="dd"></i></span>
    <span class="sb sb-t sb-g">跨图层选择</span>
    <span class="sb sb-t2 sb-g">折线选择</span>
    <span class="st st-hint">按鼠标左键指定第一个角点，或拾取构件图元</span>
    <span class="st st-fps">90.9091 FPS</span>
  </footer>

  <footer class="taskbar">
    <div class="orb"><svg viewBox="0 0 38 38"><defs><radialGradient id="g-orb" cx=".5" cy=".35" r=".7"><stop offset="0" stop-color="#aee1f5"/><stop offset=".6" stop-color="#2c7fb8"/><stop offset="1" stop-color="#134a78"/></radialGradient></defs><circle cx="19" cy="19" r="18" fill="url(#g-orb)" stroke="#5a7a95"/><path d="M10 12l8-2v8l-8 1z" fill="#e8432e"/><path d="M19 10l9-2-1 9-8 1z" fill="#8cc63f"/><path d="M10 20l8-1v8l-9-1z" fill="#2f9ee8"/><path d="M19 19l8-1-1 9-7 1z" fill="#fdc52b"/></svg></div>
    <div class="tb-btn"><span class="tb-cad">CAD</span></div>
    <div class="tb-btn tb-btn-on"><span class="tb-t">T</span></div>
    <div class="tb-btn"><svg class="tb-e" viewBox="0 0 32 34"><circle cx="16" cy="18" r="14" fill="#fff" stroke="#7ac143" stroke-width="3"/><path d="M9 18h14c0-5-3-8-7-8s-8 3-8 8 4 8 8 8c3 0 5-1 7-3" fill="none" stroke="#3aa935" stroke-width="3.500"/><path d="M3 10C10 2 26-1 30 3" fill="none" stroke="#3aa935" stroke-width="2"/></svg></div>
    <div class="tray">
      <span class="tr-s">S</span>
      <svg class="ti" viewBox="0 0 16 18"><path d="M8 1l6 3.500v8L8 16l-6-3.500v-8z" fill="#2f80d8"/><path d="M8 9L2 5.500M8 9l6-3.500M8 9v7" stroke="#fff"/></svg>
      <svg class="ti" viewBox="0 0 18 18"><rect x="1" y="1" width="16" height="16" rx="3" fill="#fff"/><circle cx="7" cy="11" r="3" fill="none" stroke="#3f8fe0" stroke-width="1.600"/><circle cx="11.500" cy="11" r="3" fill="none" stroke="#e84a8a" stroke-width="1.600"/><circle cx="9" cy="6.500" r="2.500" fill="none" stroke="#3fc0e8" stroke-width="1.600"/></svg>
      <svg class="ti" viewBox="0 0 18 20"><ellipse cx="9" cy="10" rx="6" ry="8" fill="#111"/><ellipse cx="9" cy="12" rx="4" ry="5" fill="#fff"/><path d="M4 11l10 0v2H4z" fill="#d92b2b"/><path d="M6 18h6l-3-2z" fill="#f5a623"/></svg>
      <svg class="ti" viewBox="0 0 18 20"><path d="M3 4l8-3 5 16-5 2L3 10z" fill="#222"/><path d="M7 6l4 2-1 5-4-3z" fill="#fff"/></svg>
      <svg class="ti" viewBox="0 0 16 18"><rect x="4" y="1" width="9" height="13" fill="none" stroke="#fff" stroke-width="1.400"/><path d="M2 6v9h8" fill="none" stroke="#fff" stroke-width="1.400"/><path d="M6 4h5M6 7h5" stroke="#fff"/></svg>
      <svg class="ti" viewBox="0 0 16 18"><path d="M2 7h3l4-4v12l-4-4H2z" fill="#fff"/><path d="M11 6c1 2 1 4 0 6M13 4c2 3 2 7 0 10" fill="none" stroke="#fff"/></svg>
    </div>
    <div class="clock"><span>11:53</span><span>2019/7/16 星期二</span></div>
    <div class="show-desk"></div>
  </footer>

  <div class="dialog">
    <div class="dlg-title"><span>报表</span>
      <div class="dlg-ctrl">
        <svg viewBox="0 0 12 12"><path d="M2 10h8" stroke="#fff" stroke-width="2"/></svg>
        <svg viewBox="0 0 12 12"><rect x="2" y="2" width="8" height="8" fill="none" stroke="#fff" stroke-width="1.300"/><path d="M2 3h8" stroke="#fff" stroke-width="2"/></svg>
        <svg viewBox="0 0 12 12"><path d="M2 1l8 10M10 1L2 11" stroke="#fff" stroke-width="1.400"/></svg>
      </div>
    </div>
    <div class="dlg-tools">
      <span class="tool t1"><svg class="ic" viewBox="0 0 16 16"><path d="M1 1h14v9H1zM1 4h14M1 7h14M5 1v9M10 1v9" fill="#fff" stroke="#7d8794"/><rect x="3" y="11" width="11" height="4" rx="2" fill="#cfe1f6" stroke="#3f8fe0"/></svg>设置报表范围</span>
      <span class="tool t2"><svg class="ic" viewBox="0 0 16 16"><path d="M2 1h9v13H2z" fill="#fff" stroke="#7d8794"/><path d="M2 1h9v3H2z" fill="#7d8794"/><circle cx="10" cy="10" r="3" fill="#fff" stroke="#f59b23" stroke-width="1.500"/><path d="M12 12l3 3" stroke="#f59b23" stroke-width="1.800"/></svg>报表反查</span>
      <span class="tool t3"><svg class="ic" viewBox="0 0 16 16"><rect x="1" y="1" width="10" height="14" fill="#5aa845"/><path d="M3 4l5 8M8 4l-5 8" stroke="#fff" stroke-width="1.300"/><path d="M10 8h5M13 5.500L15.500 8 13 10.500" fill="none" stroke="#f59b23" stroke-width="1.500"/></svg>导出<i class="dd"></i></span>
      <span class="tool t4"><svg class="ic" viewBox="0 0 16 16"><path d="M3 1h7l3 3v5H3z" fill="#fff" stroke="#7d8794"/><rect x="1" y="8" width="14" height="6" rx="1" fill="#6d93c2"/><rect x="4" y="11" width="8" height="4" fill="#fff" stroke="#7d8794"/></svg>打印预览</span>
      <span class="dlg-search"><span class="ds-t">搜索报表</span><svg class="ds-i" viewBox="0 0 14 14"><circle cx="6" cy="6" r="4" fill="#e0effc" stroke="#7db2e8"/><path d="M9 9l3 3" stroke="#7db2e8" stroke-width="1.400"/></svg></span>
      <span class="tool t5">项目特征添加位置<i class="dd"></i></span>
    </div>
    <div class="dlg-body">
      <div class="d-left">
        <div class="d-tabs"><span class="d-tab">钢筋报表量</span><span class="d-tab d-tab-on">土建报表量</span></div>
        <ul class="d-tree">
          <li class="dr"><i class="tri"></i>做法汇总分析</li>
          <li class="dr dl"><span class="dli"><svg class="ic"><use href="#i-doc"/></svg>清单汇总表</span></li>
          <li class="dr dl"><span class="dli"><svg class="ic"><use href="#i-doc"/></svg>清单部位计算书</span></li>
          <li class="dr dl"><span class="dli"><svg class="ic"><use href="#i-doc"/></svg>清单定额汇总表</span></li>
          <li class="dr dl"><span class="dli"><svg class="ic"><use href="#i-doc"/></svg>清单定额部位计算书</span></li>
          <li class="dr dl"><span class="dli"><svg class="ic"><use href="#i-doc"/></svg>构件做法汇总表</span></li>
          <li class="dr"><i class="tri"></i>构件汇总分析</li>
          <li class="dr dl"><span class="dli dli-on"><svg class="ic"><use href="#i-doc"/></svg>绘图输入工程量汇总表</span></li>
          <li class="dr dl"><span class="dli"><svg class="ic"><use href="#i-doc"/></svg>绘图输入构件工程量计算书</span></li>
          <li class="dr dl"><span class="dli"><svg class="ic"><use href="#i-doc"/></svg>表格输入工程量计算书</span></li>
        </ul>
      </div>
      <div class="d-mid">
        <div class="m-tools"><span class="tool">全部展开(W)</span><span class="tool">全部折叠(X)</span></div>
        <ul class="m-tree">
          <li class="mr"><i class="tri"></i>柱</li>
          <li class="mr ml"><span class="mli">柱</span></li>
          <li class="mr"><i class="tri"></i>墙</li>
          <li class="mr ml"><span class="mli">剪力墙</span></li>
          <li class="mr"><i class="tri"></i>门窗洞</li>
          <li class="mr ml"><span class="mli">墙洞</span></li>
          <li class="mr"><i class="tri"></i>梁</li>
          <li class="mr ml"><span class="mli mli-on">连梁</span></li>
        </ul>
      </div>
      <div class="d-right">
        <div class="r-tools">
          <span class="r-select">清单工程量<i class="dd"></i></span>
          <span class="tool r1"><svg class="ic" viewBox="0 0 16 16"><path d="M1 1h9v13H1z" fill="#fff" stroke="#3f8fe0"/><path d="M1 1h9v3H1zM3 6h5M3 8h3" fill="#3f8fe0" stroke="#3f8fe0"/><circle cx="11" cy="11" r="3.500" fill="none" stroke="#f59b23" stroke-width="2"/></svg>设置分类条件</span>
          <span class="tool r2"><svg class="ic" viewBox="0 0 16 16"><path d="M1 2h12v12H1zM1 6h12M1 10h12M5 2v12M9 2v12" fill="#fff" stroke="#3f8fe0"/><path d="M1 2h12v3H1z" fill="#3f8fe0"/><path d="M13 7l3 3-3 3z" fill="#f59b23"/></svg>选择工程量</span>
          <span class="tool r3"><svg class="ic" viewBox="0 0 16 16"><path d="M2 1h7l3 3v7H2z" fill="#fff" stroke="#999"/><path d="M5 4h7l3 3v8H5z" fill="#fff" stroke="#999"/><path d="M9 15l3-3M12 12v3" stroke="#3f8fe0" stroke-width="1.300"/></svg>设置批量导出</span>
          <i class="cb on r-check"></i><span class="r-label">显示房间、组合构件量</span>
        </div>
        <div class="sheet">
          <table class="tbl">
            <colgroup><col class="c-rn"><col class="c-fl"><col class="c-w"><col class="c-w"><col class="c-w"><col class="c-w"><col class="c-w"><col class="c-w"><col class="c-w"><col class="c-w"><col class="c-w"><col class="c-w"><col class="c-w"></colgroup>
            <thead>
              <tr class="h1">
                <th class="rn rn-h"></th><th rowspan="2">楼层</th><th rowspan="2">名称</th><th rowspan="2">材质</th><th rowspan="2">混凝土类<br>型</th><th rowspan="2">混凝土强<br>度等级</th><th colspan="7">工程量名称</th>
              </tr>
              <tr class="h2">
                <th class="rn rn-h"></th><th class="hn">体积(m3)</th><th class="hn">截面周长(<br>m)</th><th class="hn">梁净长(m)</th><th class="hn">轴线长度(<br>m)</th><th class="hn">梁侧面面<br>积(m2)</th><th class="hn">截面面积(<br>m2)</th><th class="hn">截面高度(<br>m)</th>
              </tr>
            </thead>
            <tbody>
              <tr><td class="rn">1</td><td class="cn fl" rowspan="29">首层</td><td class="cn lat" rowspan="4">LL-1</td><td class="cn wr" rowspan="3">商品混凝土</td><td class="cn wr" rowspan="2">混凝土20石</td><td class="cn lat">C35</td><td class="n">10.9904</td><td class="n">48</td><td class="n">35.1</td><td class="n">35.2</td><td class="n">87.935</td><td class="n">5</td><td class="n">20</td></tr>
              <tr class="bold"><td class="rn">2</td><td class="cn xj">小计</td><td class="n">10.9904</td><td class="n">48</td><td class="n">35.1</td><td class="n">35.2</td><td class="n">87.935</td><td class="n">5</td><td class="n">20</td></tr>
              <tr class="bold"><td class="rn">3</td><td class="cn xj" colspan="2">小计</td><td class="n">10.9904</td><td class="n">48</td><td class="n">35.1</td><td class="n">35.2</td><td class="n">87.935</td><td class="n">5</td><td class="n">20</td></tr>
              <tr class="bold"><td class="rn">4</td><td class="cn xj" colspan="3">小计</td><td class="n">10.9904</td><td class="n">48</td><td class="n">35.1</td><td class="n">35.2</td><td class="n">87.935</td><td class="n">5</td><td class="n">20</td></tr>

              <tr><td class="rn">5</td><td class="cn lat" rowspan="4">LL-2</td><td class="cn wr" rowspan="3">商品混凝土</td><td class="cn wr" rowspan="2">混凝土20石</td><td class="cn lat">C35</td><td class="n">0.836</td><td class="n">9.2</td><td class="n">4.4</td><td class="n">4.4</td><td class="n">8.36</td><td class="n">0.76</td><td class="n">3.8</td></tr>
              <tr class="bold"><td class="rn">6</td><td class="cn xj">小计</td><td class="n">0.836</td><td class="n">9.2</td><td class="n">4.4</td><td class="n">4.4</td><td class="n">8.36</td><td class="n">0.76</td><td class="n">3.8</td></tr>
              <tr class="bold"><td class="rn">7</td><td class="cn xj" colspan="2">小计</td><td class="n">0.836</td><td class="n">9.2</td><td class="n">4.4</td><td class="n">4.4</td><td class="n">8.36</td><td class="n">0.76</td><td class="n">3.8</td></tr>
              <tr class="bold"><td class="rn">8</td><td class="cn xj" colspan="3">小计</td><td class="n">0.836</td><td class="n">9.2</td><td class="n">4.4</td><td class="n">4.4</td><td class="n">8.36</td><td class="n">0.76</td><td class="n">3.8</td></tr>

              <tr><td class="rn">9</td><td class="cn lat" rowspan="4">LL-3</td><td class="cn wr" rowspan="3">商品混凝土</td><td class="cn wr" rowspan="2">混凝土20石</td><td class="cn lat">C35</td><td class="n">0.792</td><td class="n">7.2</td><td class="n">4.4</td><td class="n">4.4</td><td class="n">5.28</td><td class="n">0.72</td><td class="n">2.4</td></tr>
              <tr class="bold"><td class="rn">10</td><td class="cn xj">小计</td><td class="n">0.792</td><td class="n">7.2</td><td class="n">4.4</td><td class="n">4.4</td><td class="n">5.28</td><td class="n">0.72</td><td class="n">2.4</td></tr>
              <tr class="bold"><td class="rn">11</td><td class="cn xj" colspan="2">小计</td><td class="n">0.792</td><td class="n">7.2</td><td class="n">4.4</td><td class="n">4.4</td><td class="n">5.28</td><td class="n">0.72</td><td class="n">2.4</td></tr>
              <tr class="bold"><td class="rn">12</td><td class="cn xj" colspan="3">小计</td><td class="n">0.792</td><td class="n">7.2</td><td class="n">4.4</td><td class="n">4.4</td><td class="n">5.28</td><td class="n">0.72</td><td class="n">2.4</td></tr>

              <tr><td class="rn">13</td><td class="cn lat" rowspan="4">LL-4</td><td class="cn wr" rowspan="3">商品混凝土</td><td class="cn wr" rowspan="2">混凝土20石</td><td class="cn lat">C35</td><td class="n">0.48</td><td class="n">3.4</td><td class="n">3.2</td><td class="n">3.2</td><td class="n">3.84</td><td class="n">0.3</td><td class="n">1.2</td></tr>
              <tr class="bold"><td class="rn">14</td><td class="cn xj">小计</td><td class="n">0.48</td><td class="n">3.4</td><td class="n">3.2</td><td class="n">3.2</td><td class="n">3.84</td><td class="n">0.3</td><td class="n">1.2</td></tr>
              <tr class="bold"><td class="rn">15</td><td class="cn xj" colspan="2">小计</td><td class="n">0.48</td><td class="n">3.4</td><td class="n">3.2</td><td class="n">3.2</td><td class="n">3.84</td><td class="n">0.3</td><td class="n">1.2</td></tr>
              <tr class="bold"><td class="rn">16</td><td class="cn xj" colspan="3">小计</td><td class="n">0.48</td><td class="n">3.4</td><td class="n">3.2</td><td class="n">3.2</td><td class="n">3.84</td><td class="n">0.3</td><td class="n">1.2</td></tr>

              <tr><td class="rn">17</td><td class="cn lat" rowspan="4">LL-5</td><td class="cn wr" rowspan="3">商品混凝土</td><td class="cn wr" rowspan="2">混凝土20石</td><td class="cn lat">C35</td><td class="n">1.32</td><td class="n">6.8</td><td class="n">8.8</td><td class="n">8.8</td><td class="n">10.56</td><td class="n">0.6</td><td class="n">2.4</td></tr>
              <tr class="bold"><td class="rn">18</td><td class="cn xj">小计</td><td class="n">1.32</td><td class="n">6.8</td><td class="n">8.8</td><td class="n">8.8</td><td class="n">10.56</td><td class="n">0.6</td><td class="n">2.4</td></tr>
              <tr class="bold"><td class="rn">19</td><td class="cn xj" colspan="2">小计</td><td class="n">1.32</td><td class="n">6.8</td><td class="n">8.8</td><td class="n">8.8</td><td class="n">10.56</td><td class="n">0.6</td><td class="n">2.4</td></tr>
              <tr class="bold"><td class="rn">20</td><td class="cn xj" colspan="3">小计</td><td class="n">1.32</td><td class="n">6.8</td><td class="n">8.8</td><td class="n">8.8</td><td class="n">10.56</td><td class="n">0.6</td><td class="n">2.4</td></tr>

              <tr><td class="rn">21</td><td class="cn lat" rowspan="4">LL-6</td><td class="cn wr" rowspan="3">商品混凝土</td><td class="cn wr" rowspan="2">混凝土20石</td><td class="cn lat">C35</td><td class="n">0.44</td><td class="n">5.6</td><td class="n">4.4</td><td class="n">4.4</td><td class="n">4.4</td><td class="n">0.4</td><td class="n">2</td></tr>
              <tr class="bold"><td class="rn">22</td><td class="cn xj">小计</td><td class="n">0.44</td><td class="n">5.6</td><td class="n">4.4</td><td class="n">4.4</td><td class="n">4.4</td><td class="n">0.4</td><td class="n">2</td></tr>
              <tr class="bold"><td class="rn">23</td><td class="cn xj" colspan="2">小计</td><td class="n">0.44</td><td class="n">5.6</td><td class="n">4.4</td><td class="n">4.4</td><td class="n">4.4</td><td class="n">0.4</td><td class="n">2</td></tr>
              <tr class="bold"><td class="rn">24</td><td class="cn xj" colspan="3">小计</td><td class="n">0.44</td><td class="n">5.6</td><td class="n">4.4</td><td class="n">4.4</td><td class="n">4.4</td><td class="n">0.4</td><td class="n">2</td></tr>

              <tr><td class="rn">25</td><td class="cn lat" rowspan="4">LL-7</td><td class="cn wr" rowspan="3">商品混凝土</td><td class="cn wr" rowspan="2">混凝土20石</td><td class="cn lat">C35</td><td class="n">0.27</td><td class="n">3.4</td><td class="n">1.8</td><td class="n">1.8</td><td class="n">2.16</td><td class="n">0.3</td><td class="n">1.2</td></tr>
              <tr class="bold"><td class="rn">26</td><td class="cn xj">小计</td><td class="n">0.27</td><td class="n">3.4</td><td class="n">1.8</td><td class="n">1.8</td><td class="n">2.16</td><td class="n">0.3</td><td class="n">1.2</td></tr>
              <tr class="bold"><td class="rn">27</td><td class="cn xj" colspan="2">小计</td><td class="n">0.27</td><td class="n">3.4</td><td class="n">1.8</td><td class="n">1.8</td><td class="n">2.16</td><td class="n">0.3</td><td class="n">1.2</td></tr>
              <tr class="bold"><td class="rn">28</td><td class="cn xj" colspan="3">小计</td><td class="n">0.27</td><td class="n">3.4</td><td class="n">1.8</td><td class="n">1.8</td><td class="n">2.16</td><td class="n">0.3</td><td class="n">1.2</td></tr>

              <tr class="bold"><td class="rn">29</td><td class="cn xj" colspan="4">小计</td><td class="n">15.1284</td><td class="n">83.6</td><td class="n">62.1</td><td class="n">62.2</td><td class="n">122.535</td><td class="n">8.08</td><td class="n">33</td></tr>
              <tr class="total"><td class="rn">30</td><td class="cn" colspan="5">合计</td><td class="n">15.1284</td><td class="n">83.6</td><td class="n">62.1</td><td class="n">62.2</td><td class="n">122.535</td><td class="n">8.08</td><td class="n">33</td></tr>
            </tbody>
          </table>
        </div>
      </div>
    </div>
    <div class="dlg-foot"><svg class="grip" viewBox="0 0 10 10"><path d="M7 1h2v2H7zM4 4h2v2H4zM7 4h2v2H7zM1 7h2v2H1zM4 7h2v2H4zM7 7h2v2H7z" fill="#7d8186"/></svg></div>
  </div>
</div>
</body>
</html>
```

FILE: styles.css
```css
* { box-sizing: border-box; }
html, body { margin: 0; padding: 0; }
body { width: 1916px; height: 1080px; overflow: hidden; background: #dddee0; color: #222;
  font: 12px/16px "Noto Sans CJK SC", "Liberation Sans", sans-serif; }
ul { list-style: none; margin: 0; padding: 0; }
i { font-style: normal; }
svg { display: block; flex: none; }
.sprite { display: none; }
.app { position: relative; width: 1916px; height: 1080px; display: flex; flex-direction: column; }

/* header */
.head { height: 41px; display: flex; background: #fff; border-bottom: 1px solid #ccc; }
.logo { width: 46px; padding: 7px 0 0 5px; }
.logo-t { display: flex; justify-content: center; align-items: center; width: 29px; height: 29px; border-radius: 6px;
  background: linear-gradient(#39b2f5, #0c6fd4); color: #fff; font: bold 27px/29px "Liberation Serif", serif; }
.head-main { flex: 1; display: flex; flex-direction: column; min-width: 0; }
.qa { height: 22px; display: flex; align-items: center; position: relative; }
.qa-icons { display: flex; align-items: center; gap: 8px; padding-left: 5px; width: 567px; flex: none; }
.qi { width: 15px; height: 16px; }
.qi-w { width: 24px; }
.qi-dd { width: 8px; height: 10px; }
.doc-title { width: 690px; white-space: nowrap; color: #222; letter-spacing: .23px; }
.win-ctrl { margin-left: auto; display: flex; gap: 24px; padding-right: 13px; }
.wc { width: 12px; height: 12px; }
.menu { height: 18px; display: flex; align-items: stretch; }
.tabs { display: flex; width: 1449px; flex: none; }
.tab { padding: 1px 13px 0; line-height: 18px; color: #333; }
.tab-on { background: #58a5f4; color: #fff; border-radius: 3px 3px 0 0; }
.help-search { width: 244px; height: 16px; border: 1px solid #ccc; display: flex; align-items: center; justify-content: space-between; padding: 0 6px 0 1px; flex: none; }
.hs-text { color: #c2c2c2; line-height: 14px; }
.hs-ico { width: 12px; height: 12px; }
.user { margin-left: 13px; width: 52px; line-height: 16px; flex: none; }
.head-icons { display: flex; gap: 8px; align-items: center; height: 18px; padding-bottom: 2px; margin-left: 1px; }
.hi { width: 14px; height: 16px; }
.hi-q { color: #7e8690; font-size: 15px; width: 14px; font-weight: bold; }

/* ribbon */
.ribbon { height: 96px; display: flex; background: linear-gradient(#fff 40%, #e9eaeb); border-bottom: 2px solid #a9abae; padding-top: 6px; }
.rgroup { position: relative; padding: 0 11px 0 10px; border-right: 1px solid #dcdde0; height: 86px; }
.rgroup-first { padding-left: 8px; }
.rgroup-wide { padding-right: 18px; }
.ritems { display: flex; gap: 10px; }
.ritem { display: flex; flex-direction: column; align-items: center; text-align: center; white-space: nowrap; }
.ritem span { margin-top: 5px; color: #222; }
.ric { width: 32px; height: 30px; }
.w36 { width: 36px; } .w48 { width: 48px; } .w60 { width: 60px; } .w72 { width: 72px; }
.rlabel { position: absolute; left: 0; right: 0; top: 72px; text-align: center; }

/* work */
.work { height: 873px; display: flex; flex-direction: column; background: #cdcfd4; }
.selectors { height: 31px; display: flex; gap: 6px; padding-top: 6px; }
.sel { width: 99px; height: 22px; background: #fff; border: 1px solid #ccc; line-height: 20px; padding-left: 2px; position: relative; display: flex; justify-content: space-between; align-items: center; padding-right: 5px; }
.sel:first-child { width: 98px; border-left: 0; }
.dd { display: inline-block; width: 0; height: 0; border: 3px solid transparent; border-top: 4px solid #555; border-bottom: 0; }
.panes { flex: 1; display: flex; min-height: 0; background: #e4e5e7; }

/* nav */
.nav { width: 205px; flex: none; position: relative; background: #fff; border-right: 1px solid #c4c5c8; display: flex; flex-direction: column; }
.pane-head { height: 20px; background: #e3e4e6; color: #777; padding-left: 5px; line-height: 20px; }
.nav-tools { height: 30px; background: #fff; border-bottom: 1px solid #d0d1d4; display: flex; justify-content: space-between; align-items: center; padding: 0 2px 0 3px; }
.nav-pin { width: 16px; height: 14px; }
.nav-btns { display: flex; gap: 4px; }
.nbtn { width: 25px; height: 24px; border: 1px solid #6cb0f2; border-radius: 4px; background: #e3f0fd; display: flex; align-items: center; justify-content: center; }
.nbtn svg { width: 16px; height: 14px; }
.nav-list { padding-top: 4px; overflow: hidden; flex: 1; }
.nr { height: 24px; display: flex; align-items: center; white-space: nowrap; padding-left: 2px; color: #222; gap: 5px; }
.nl { padding-left: 37px; }
.nli { width: 120px; height: 21px; display: flex; align-items: center; gap: 5px; padding-left: 5px; }
.nli-on { background: #c6d8f0; }
.fo { width: 14px; height: 14px; }
.ic { width: 16px; height: 16px; }
.nav-scroll { position: absolute; left: 194px; top: 63px; width: 8px; height: 723px; background: #c8c8c8; border-radius: 4px; }

/* middle */
.mid { width: 274px; flex: none; margin-left: 4px; display: flex; flex-direction: column; gap: 4px; }
.comp { height: 290px; background: #fff; border: 1px solid #c8c9cc; border-top: 0; }
.strip { height: 12px; background: #d9dadd; }
.comp-title { height: 22px; line-height: 22px; padding-left: 8px; background: #f2f2f2; border-bottom: 1px solid #ccc; font-weight: bold; }
.comp-tools { height: 33px; padding: 8px 3px; background: #f6f6f6; border-bottom: 1px solid #ccc; }
.comp-search { height: 16px; padding-left: 2px; color: #888; border-bottom: 1px solid #ccc; line-height: 15px; }
.comp-tree { padding: 3px 0 0 11px; display: flex; align-items: center; gap: 5px; }
.tri { display: inline-block; width: 0; height: 0; border-style: solid; border-width: 0 0 6px 6px; border-color: transparent transparent #333 transparent; }
.prop { flex: 1; min-height: 0; background: #fff; border-left: 1px solid #c8c9cc; display: flex; flex-direction: column; border-right: 1px solid #c8c9cc; }
.prop > .strip { height: 13px; }
.prop-head, .prop-blank, .pr { display: flex; }
.prop-head { height: 20px; background: #f2f2f2; border-bottom: 1px solid #ccc; }
.prop-blank { height: 22px; background: #f2f2f2; border-bottom: 1px solid #ccc; }
.pr { height: 21px; border-bottom: 1px solid #ccc; }
.pc-n { width: 22px; flex: none; background: #eeeeee; border-right: 1px solid #ccc; text-align: center; line-height: 20px; color: #333; }
.pc-a { width: 101px; flex: none; border-right: 1px solid #ccc; line-height: 20px; padding-left: 3px; display: flex; align-items: center; gap: 8px; white-space: nowrap; }
.pc-b { width: 110px; flex: none; border-right: 1px solid #ccc; line-height: 20px; }
.pc-c { flex: 1; }
.pc-g { background: #ebebeb; }
.pr-on .pc-n { background: #7ab4f0; color: #fff; font-weight: bold; }
.plus, .minus { display: block; width: 11px; height: 13px; border: 1px solid #666; border-radius: 2px; font-size: 10px; line-height: 11px; text-align: center; background: #fff; color: #333; flex: none; }
.prop-fill { flex: 1; display: flex; }
.prop-fill .pc-n { border-right: 1px solid #ccc; }

/* canvas */
.canvas { width: 1140px; flex: none; margin-left: 6px; background: #000; }
.scene { width: 1140px; height: 842px; }
.scene text { font-family: "Liberation Serif", serif; }
.ax { fill: #f00; font-size: 16px; }
.lb { fill: #fff; font-size: 18px; text-anchor: middle; }

/* layers */
.layers { width: 283px; flex: none; margin-left: 4px; background: #eee; border: 1px solid #cfd0d3; border-top: 0; border-right: 0; display: flex; flex-direction: column; }
.ly-head { height: 12px; background: #d5d6da; text-align: right; padding-right: 5px; line-height: 12px; color: #777; font-size: 14px; }
.ly-x { display: inline-block; }
.ly-tool { height: 21px; border-bottom: 1px solid #ccc; background: #eee; }
.ly-tabs { height: 31px; padding: 5px 0 0 7px; display: flex; gap: 2px; align-items: flex-end; border-bottom: 1px solid #ccc; }
.ly-tab { height: 22px; width: 60px; background: #e0e0e0; color: #555; text-align: center; line-height: 22px; border-radius: 3px 3px 0 0; }
.ly-tab-on { height: 25px; width: 58px; background: #fff; color: #2e86e8; border: 1px solid #ccc; border-bottom: 0; line-height: 24px; }
.ly-body { margin: 3px 0 0 3px; width: 275px; height: 736px; display: flex; background: #fff; border: 1px solid #ccc; }
.ly-table { width: 259px; flex: none; }
.lr { height: 21px; display: flex; border-bottom: 1px solid #d4d5d8; }
.lr-head { height: 20px; background: #f2f2f2; }
.lc-a { width: 134px; flex: none; border-right: 1px solid #ccc; line-height: 20px; white-space: nowrap; display: flex; align-items: center; }
.lc-head { padding-left: 42px; }
.lc-b { width: 63px; flex: none; border-right: 1px solid #ccc; display: flex; justify-content: center; align-items: center; line-height: 20px; color: #444; }
.l0 { padding-left: 20px; }
.l1 { padding-left: 30px; }
.l2 { padding-left: 40px; }
.lc-minus { padding-left: 13px; gap: 6px; background: linear-gradient(#bbb, #bbb) 8px 0/1px 100% no-repeat; }
.lc-leaf { background: linear-gradient(#bbb, #bbb) 8px 0/1px 100% no-repeat, linear-gradient(#bbb, #bbb) 18px 0/1px 100% no-repeat, linear-gradient(#bbb, #bbb) 18px 10px/17px 1px no-repeat; }
.cb { position: relative; display: block; width: 14px; height: 14px; border: 1px solid #8a8a8a; border-radius: 3px; background: #fff; flex: none; }
.cb.on { border: 0; background: #5ba2f5; }
.cb.on::after { content: ""; position: absolute; left: 4px; top: 2.500px; width: 6px; height: 3.500px; border-left: 2px solid #fff; border-bottom: 2px solid #fff; transform: rotate(-45deg) ; }
.cb.off { background: #eee; border-color: #bbb; }
.cb.part { background: #9cc6f7; box-shadow: inset 0 0 0 1px #fff; }
.ly-scroll { width: 14px; flex: none; position: relative; display: flex; flex-direction: column; align-items: center; }
.arr-up { margin-top: 3px; width: 0; height: 0; border: 4px solid transparent; border-bottom: 4px solid #222; border-top: 0; }
.arr-down { position: absolute; bottom: 3px; width: 0; height: 0; border: 4px solid transparent; border-top: 4px solid #222; border-bottom: 0; }
.ly-thumb { margin-top: 2px; width: 8px; height: 248px; border-radius: 4px; background: #c8c8c8; }
.ly-foot { padding: 7px 0 0 183px; }
.restore { width: 91px; height: 25px; background: #f5f5f7; border: 1px solid #cdd0d6; border-radius: 3px; font: inherit; color: #444; padding: 0; }

/* status */
.status { height: 30px; background: #dddee0; display: flex; align-items: center; color: #333; }
.st { white-space: nowrap; line-height: 30px; flex: none; }
.st-xy { width: 261px; font-size: 13px; }
.st-h { width: 83px; }
.st-b { width: 133px; }
.st-z { width: 103px; }
.sb { height: 24px; display: flex; align-items: center; justify-content: center; gap: 4px; flex: none; margin-right: 3px; white-space: nowrap; }
.sb svg { width: 16px; height: 16px; }
.sb-on { border: 1px solid #4a9ae8; background: #fff; }
.sb-g { border: 1px solid #b4b5b8; background: #d0d1d3; }
.sb-s { width: 26px; }
.sb-m { width: 36px; }
.sb-t { width: 74px; }
.sb-t2 { width: 60px; margin-left: 1px; }
.st-hint { margin-left: 3px; }
.st-fps { margin-left: auto; padding-right: 12px; }

/* taskbar */
.taskbar { height: 40px; display: flex; align-items: center; border-top: 2px solid #3a4656;
  background: linear-gradient(90deg, #a7c0dc 0, #a7c0dc 1570px, #7f93ab 1640px, #7f93ab 100%); }
.orb { width: 38px; height: 38px; margin: 0 13px 0 4px; }
.orb svg { width: 38px; height: 38px; }
.tb-btn { width: 60px; height: 37px; margin-right: 2px; border: 1px solid #d6e2ef; border-radius: 3px; background: linear-gradient(#c8d9ea, #9fb9d4); display: flex; align-items: center; justify-content: center; }
.tb-btn-on { background: linear-gradient(#e6eff8, #b8cfe6); border-color: #3e4a58; }
.tb-cad { width: 30px; height: 30px; background: #1a5ca8; color: #fff; border: 2px solid #9aa; text-align: center; font: bold 12px/26px "Liberation Mono", monospace; }
.tb-t { width: 30px; height: 32px; background: #2f8ff0; border-radius: 4px; color: #fff; text-align: center; font: bold 26px/32px "Liberation Serif", serif; }
.tb-e { width: 32px; height: 34px; }
.tray { margin-left: auto; display: flex; align-items: center; gap: 9px; }
.tr-s { width: 16px; height: 22px; background: #f0541e; color: #fff; border-radius: 4px; font: bold 17px/22px "Liberation Sans", sans-serif; text-align: center; margin-right: 5px; }
.ti { width: 16px; height: 18px; }
.clock { width: 107px; margin-left: 6px; margin-right: 7px; display: flex; flex-direction: column; align-items: center; color: #fff; line-height: 17px; }
.show-desk { width: 13px; height: 38px; margin-left: 5px; background: linear-gradient(90deg, #7a8ca2, #a4b4c6); border: 1px solid #5d6b7c; }

/* report dialog, a floating window */
.dialog { position: absolute; left: 223px; top: 107px; width: 1466px; height: 825px; background: #dddee0; display: flex; flex-direction: column; border-right: 1px solid #b5b7bb; border-bottom: 1px solid #b5b7bb; }
.dlg-title { height: 27px; flex: none; background: #2e7de1; color: #fff; display: flex; justify-content: space-between; align-items: center; padding: 0 8px 2px 7px; }
.dlg-ctrl { display: flex; gap: 16px; padding-top: 2px; }
.dlg-ctrl svg { width: 12px; height: 12px; }
.dlg-tools { height: 28px; flex: none; background: #fff; margin: 1px 0 0 1px; display: flex; align-items: center; padding-bottom: 2px; }
.tool { display: inline-flex; align-items: center; height: 24px; border: 1px solid #f5f5f5; border-radius: 3px; white-space: nowrap; color: #333; flex: none; gap: 4px; }
.dlg-tools .tool .dd { margin-left: 2px; }
.t1 { margin-left: 6px; width: 99px; }
.t2 { margin-left: 6px; width: 74px; }
.t3 { margin-left: 6px; width: 60px; }
.t4 { margin-left: 3px; width: 76px; }
.dlg-search { width: 120px; height: 24px; border: 1px solid #ccc; margin-left: 2px; display: flex; justify-content: space-between; align-items: center; padding: 0 5px 0 2px; color: #999; flex: none; }
.ds-i { width: 12px; height: 12px; }
.t5 { margin-left: 4px; padding-left: 2px; gap: 6px; }
.dlg-body { flex: 1; min-height: 0; display: flex; padding: 1px 0 0 2px; background: #dddee0; height: 739px; }
.d-left { width: 261px; flex: none; display: flex; flex-direction: column; padding-top: 4px; }
.d-tabs { height: 26px; display: flex; align-items: flex-end; gap: 2px; }
.d-tab { height: 22px; width: 70px; background: #dadbdd; color: #555; text-align: center; line-height: 20px; }
.d-tab-on { height: 26px; width: 68px; background: #fff; color: #2e86e8; border: 1px solid #ccc; border-bottom: 0; line-height: 24px; }
.d-tree { flex: 1; background: #fff; border: 1px solid #c4c6ca; padding-top: 3px; }
.dr { height: 24px; display: flex; align-items: center; padding-left: 10px; gap: 6px; white-space: nowrap; color: #333; }
.dl { padding-left: 40px; }
.dli { width: 183px; height: 21px; display: flex; align-items: center; gap: 6px; padding-left: 4px; }
.dli-on { background: #c6d8f0; }
.d-mid { width: 255px; margin-left: 6px; flex: none; display: flex; flex-direction: column; }
.m-tools { height: 26px; background: #fff; display: flex; align-items: center; gap: 6px; padding-left: 6px; padding-bottom: 1px; border: 1px solid #e4e4e4; }
.m-tools .tool { padding: 0 1px; }
.m-tree { flex: 1; margin-top: 7px; background: #fff; border: 1px solid #c4c6ca; padding-top: 2px; }
.mr { height: 24px; display: flex; align-items: center; padding-left: 8px; gap: 6px; color: #333; }
.ml { padding-left: 39px; }
.mli { flex: 1; height: 21px; display: flex; align-items: center; padding-left: 5px; }
.mli-on { background: #c6d8f0; }
.d-right { flex: 1; min-width: 0; margin-left: 5px; display: flex; flex-direction: column; }
.r-tools { height: 29px; background: #fff; display: flex; align-items: center; padding-left: 2px; padding-bottom: 1px; color: #333; }
.r-select { width: 79px; height: 23px; border: 1px solid #aaa; background: #fff; display: flex; align-items: center; justify-content: space-between; padding: 0 3px; color: #222; flex: none; }
.r1 { margin-left: 6px; width: 93px; }
.r2 { margin-left: 9px; width: 81px; }
.r3 { margin-left: 13px; width: 92px; }
.r-check { margin-left: 10px; }
.r-label { margin-left: 7px; }
.sheet { flex: 1; margin-top: 6px; background: #fff; position: relative; overflow: hidden; }
.sheet::before { content: ""; position: absolute; left: 0; right: 0; top: -6px; height: 6px; background: #eee; }
.tbl { border-collapse: collapse; table-layout: fixed; width: 746px; color: #111; }
.c-rn { width: 14px; } .c-fl { width: 60px; } .c-w { width: 61px; }
.tbl th, .tbl td { border: 1px solid #000; padding: 0; height: 19px; line-height: 16px; text-align: center; overflow: hidden; }
.tbl tr.h1 th { height: 18px; border-top: 0; }
.tbl tr.h2 th { height: 33px; }
.tbl th { font-weight: bold; }
.tbl th.hn { font-weight: normal; line-height: 14px; }
.tbl .rn { border: 1px solid #dedede; background: #f3f3f3; font-family: "Liberation Sans", sans-serif; font-weight: normal; color: #444; line-height: 18px; letter-spacing: -.3px; }
.tbl .rn-h { border-right-color: #000; border-right-style: solid; }
.tbl td.n { text-align: right; padding-right: 2px; font: 12px/18px "Liberation Mono", monospace; letter-spacing: -1.200px; }
.tbl .bold td.n { font-weight: bold; letter-spacing: -1.100px; }
.tbl .xj { font-weight: bold; }
.tbl .lat { font: 12px/18px "Liberation Mono", monospace; letter-spacing: -1.200px; }
.tbl .lat[rowspan] { padding-top: 4px; }
.tbl .wr { padding: 0 1px; line-height: 15px; }
.tbl .fl { border-left-color: #dedede; }
.tbl .total td:not(.rn) { background: #e4e4e4; }

.dlg-foot { height: 30px; flex: none; position: relative; background: #dddee0; }
.grip { position: absolute; right: 3px; bottom: 3px; width: 10px; height: 10px; }
```
